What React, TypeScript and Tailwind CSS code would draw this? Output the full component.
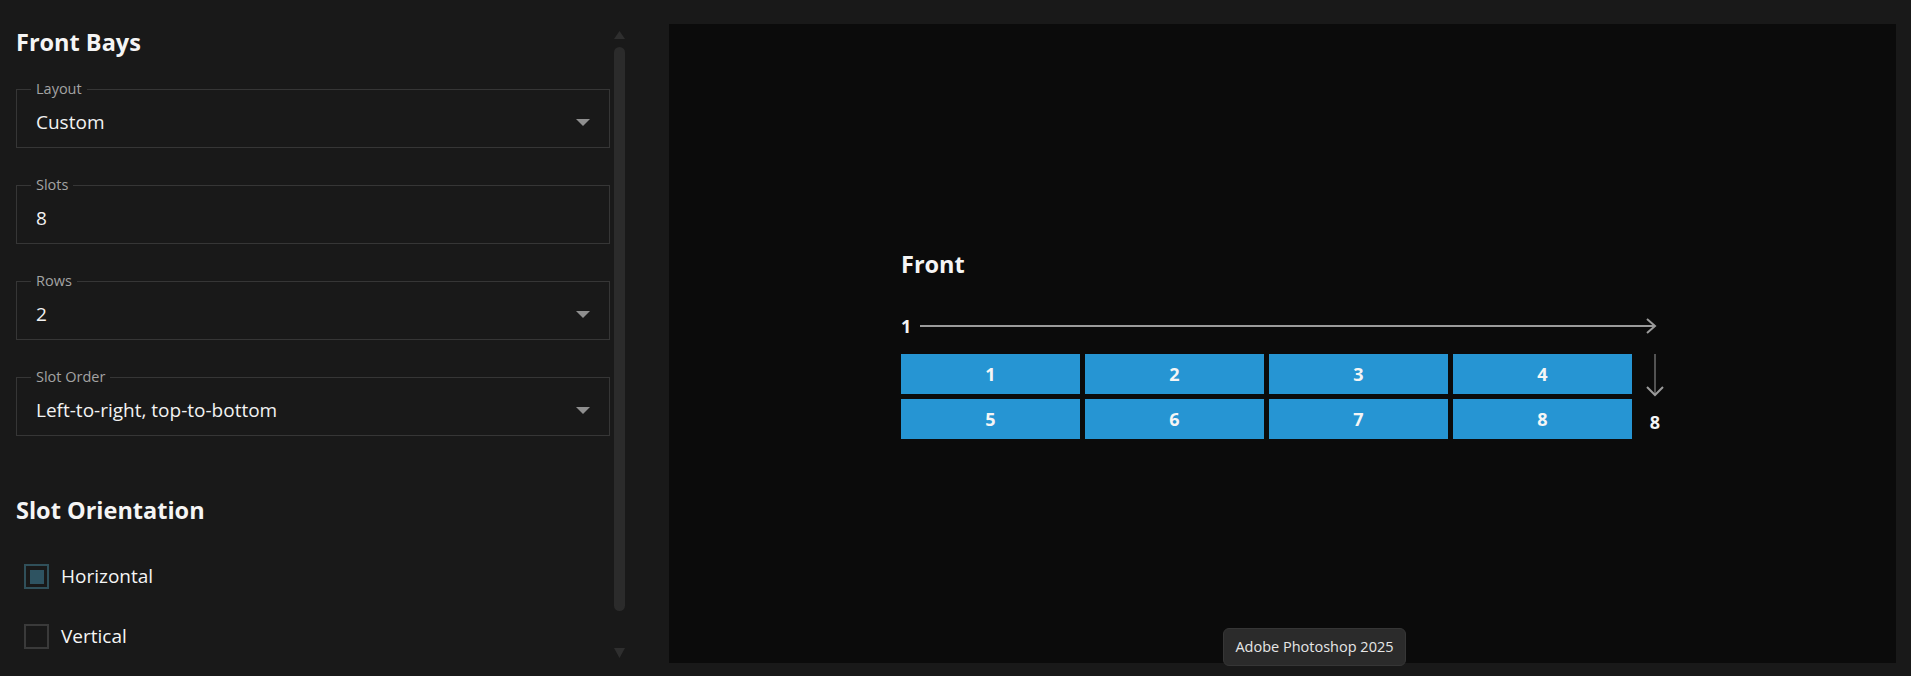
import React from 'react';

const fields = [
  { label: 'Layout', value: 'Custom', dropdown: true },
  { label: 'Slots', value: '8', dropdown: false },
  { label: 'Rows', value: '2', dropdown: true },
  { label: 'Slot Order', value: 'Left-to-right, top-to-bottom', dropdown: true },
];

const Field: React.FC<{ label: string; value: string; dropdown: boolean }> = ({ label, value, dropdown }) => (
  <fieldset className="m-0 min-w-0 border border-[#363636] p-0">
    <legend className="ml-[14px] px-[5px] text-[14.5px] leading-[16px] text-[#a3a3a3]">{label}</legend>
    <div className="flex h-[50px] items-center justify-between px-[19px]">
      <span className="text-[19px] text-[#f2f2f2]">{value}</span>
      {dropdown && (
        <svg width="14" height="7" viewBox="0 0 14 7">
          <path d="M0 0h14L7 7z" fill="#8f8f8f" />
        </svg>
      )}
    </div>
  </fieldset>
);

const App: React.FC = () => {
  return (
    <div className="relative flex h-[676px] w-[1911px] overflow-hidden bg-[#191919] font-['Open_Sans',sans-serif] text-[#f5f5f5]">
      {/* Settings panel */}
      <div className="flex w-[669px] shrink-0">
        <div className="w-[610px] pl-4 pt-[26px]">
          <h2 className="text-[23.5px] font-bold leading-[32px]">Front Bays</h2>
          <div className="mt-[23px] flex flex-col gap-[29px]">
            {fields.map((f) => (
              <Field key={f.label} {...f} />
            ))}
          </div>
          <h2 className="mt-[58px] text-[23.5px] font-bold leading-[32px]">Slot Orientation</h2>
          <div className="mt-[38px] flex flex-col gap-[35px] pl-2">
            <div className="flex h-[25px] items-center gap-[12px]">
              <div className="flex h-[25px] w-[25px] items-center justify-center border-2 border-[#30505a]">
                <div className="h-[14px] w-[14px] bg-[#2e5361]" />
              </div>
              <span className="text-[19px]">Horizontal</span>
            </div>
            <div className="flex h-[25px] items-center gap-[12px]">
              <div className="h-[25px] w-[25px] border-2 border-[#3a3a3a]" />
              <span className="text-[19px]">Vertical</span>
            </div>
          </div>
        </div>
        {/* Scrollbar */}
        <div className="ml-1 flex w-[11px] flex-col items-center pt-[31px]">
          <svg width="11" height="8" viewBox="0 0 11 8">
            <path d="M5.5 0L11 8H0z" fill="#2e2e2e" />
          </svg>
          <div className="mt-[8px] h-[564px] w-[11px] rounded-full bg-[#2b2b2b]" />
          <svg className="mt-[37px]" width="11" height="10" viewBox="0 0 11 10">
            <path d="M0 0h11L5.5 10z" fill="#2e2e2e" />
          </svg>
        </div>
      </div>

      {/* Canvas */}
      <div className="mb-[13px] mr-[15px] mt-[24px] flex flex-1 items-center justify-center bg-[#0b0b0b]">
        <div className="flex flex-col">
          <div className="text-[23.5px] font-bold leading-[32px]">Front</div>
          <div className="mt-[36px] flex h-[20px] items-center">
            <span className="w-[19px] text-[18px] font-bold leading-[20px]">1</span>
            <svg width="743" height="18" viewBox="0 0 743 18">
              <path d="M0 9H735" stroke="#9b9b9b" strokeWidth="2" />
              <path d="M727 2L735 9L727 16" stroke="#9b9b9b" strokeWidth="2" fill="none" />
            </svg>
          </div>
          <div className="mt-[18px] flex">
            <div className="grid w-[731px] grid-cols-4 gap-[5px]">
              {[1, 2, 3, 4, 5, 6, 7, 8].map((n) => (
                <div key={n} className="flex h-[40px] items-center justify-center bg-[#2695d3] text-[18px] font-bold">
                  {n}
                </div>
              ))}
            </div>
            <div className="ml-[14px] flex w-[18px] flex-col items-center">
              <svg width="18" height="43" viewBox="0 0 18 43">
                <path d="M9 0V41" stroke="#9b9b9b" strokeWidth="1" />
                <path d="M1 33L9 41L17 33" stroke="#9b9b9b" strokeWidth="2" fill="none" />
              </svg>
              <span className="mt-[15px] text-[18px] font-bold leading-[20px]">8</span>
            </div>
          </div>
        </div>
      </div>

      {/* Tooltip */}
      <div className="absolute left-[1223px] top-[628px] flex h-[38px] w-[183px] items-center justify-center rounded-md border border-[#363636] bg-[#2b2b2b] text-[14.5px] text-[#e6e6e6]">
        Adobe Photoshop 2025
      </div>
    </div>
  );
};

export default App;
